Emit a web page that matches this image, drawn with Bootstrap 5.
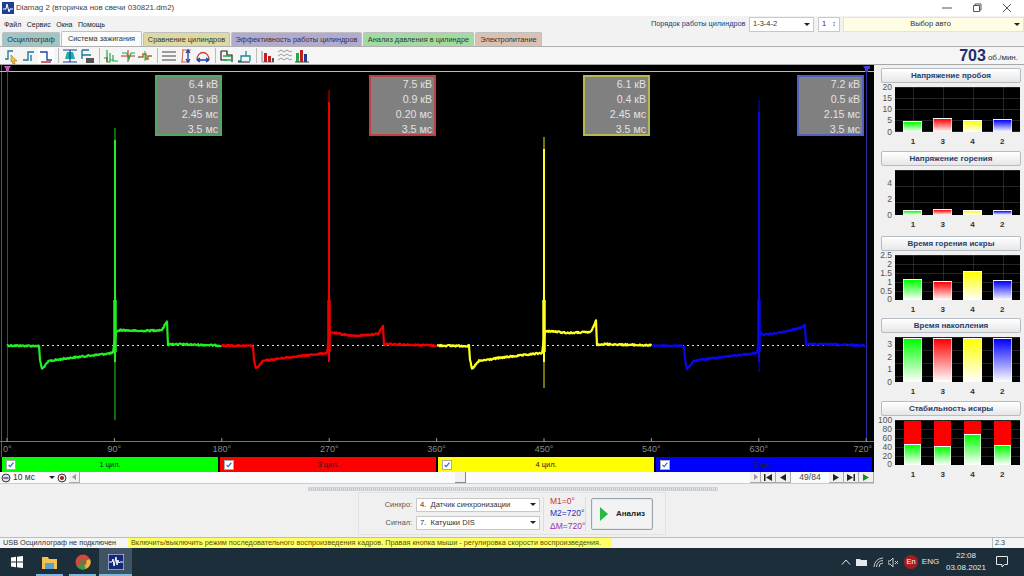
<!DOCTYPE html>
<html lang="ru">
<head>
  <meta charset="UTF-8">
  <meta name="viewport" content="width=device-width, initial-scale=1">
  <title>Diamag 2</title>
  <link href="https://cdn.jsdelivr.net/npm/bootstrap@5.3.2/dist/css/bootstrap.min.css" rel="stylesheet">
  <style>
    html, body { width: 1024px; height: 576px; overflow: hidden; }
    body { background: #f0f0f0; font-family: "Liberation Sans", Arial, sans-serif; font-size: 7.4px; color: #222; line-height: 1; white-space: nowrap; }

    /* title + menu */
    .title-row { height: 16px; background: #fff; padding-left: 2px; }
    .title-text { font-size: 7.9px; color: #444; margin-left: 2px; }
    .win-btn { width: 30px; text-align: center; line-height: 0; }
    .menu-row { height: 16px; background: #f2f2f2; padding-left: 4px; }
    .menu-row .menu-item { margin-right: 5.5px; font-size: 7px; }
    .order-label { color: #23406e; font-size: 7.3px; margin-right: 4px; width: 94px; }
    .win-select { height: 15px; background-color: #fff; border: 1px solid #c8c8c8; border-radius: 0; font-size: 7.5px; padding: 0 3px; display: flex; align-items: center; justify-content: space-between; color: #333; }
    .win-select i { width: 0; height: 0; border-left: 3px solid transparent; border-right: 3px solid transparent; border-top: 3px solid #222; }
    .auto-select { background: #fffde3; flex: 1; margin-left: 3px; border-color: #e8e6c8; }

    /* tabs */
    .tab-row { height: 15px; padding-left: 2px; border-bottom: 1px solid #b0b0b0; background: #f2f2f2; }
    .app-tab { height: 14px; padding: 0; font-size: 7.4px; border: 1px solid #c0c0c0; border-bottom: 0; border-radius: 2px 2px 0 0; margin-right: 1px; color: #333; display: flex; align-items: center; justify-content: center; }
    .app-tab.on { background: #fbfbfb; height: 15px; margin-top: -1px; margin-bottom: -1px; }

    /* toolbar */
    .tool-row { height: 18px; background: #f5f5f5; border-bottom: 1px solid #a8a8a8; padding-left: 4px; }
    .tool-row svg { width: 16px; height: 16px; flex: none; margin-right: 1px; }
    .tool-row svg.pressed { background: #fff; }
    .tool-sep { width: 1px; height: 15px; background: #bbb; margin: 0 3px; flex: none; }
    .rpm { font-size: 16px; font-weight: 700; color: #1b2f6b; }
    .rpm-unit { font-size: 8px; color: #333; margin: 5px 6px 0 2px; }

    /* scope */
    .work-row { height: 419px; }
    .scope-col { width: 874px; flex: none; }
    .scope-box { height: 392px; background: #000; }
    .scope-box svg { display: block; }
    .info-box { position: absolute; top: 10px; width: 67px; height: 61px; background: #808080; border: 2px solid; color: #e2e2e2; font-size: 10.6px; line-height: 15px; text-align: right; padding: 0 2px 0 0; }
    .chan-row { height: 15px; background: #000; padding: 0 2px; gap: 2px; }
    .chan-bar { flex: 1; color: #222; font-size: 7.5px; padding-left: 4px; }
    .chan-bar span { flex: 1; text-align: center; padding-right: 14px; }
    .chan-check { width: 10px; height: 10px; background: #fff; border: 1px solid #aaa; flex: none; }
    .chan-check svg { display: block; }
    .scroll-row { height: 12px; background: #fbfbfb; border-bottom: 1px solid #ccc; }
    .mini-btn { width: 15px; height: 11px; background: #f0f0f0; border-right: 1px solid #aaa; border-bottom: 1px solid #aaa; display: flex; align-items: center; justify-content: center; flex: none; }
    .scroll-track { flex: 1; position: relative; }
    .scroll-thumb { position: absolute; left: 375px; top: 0; width: 11px; height: 11px; background: #f0f0f0; border-right: 1px solid #888; border-bottom: 1px solid #888; }

    /* right gauges */
    .gauge-col { width: 150px; flex: none; padding: 3px 3px 0 4px; }
    .gauge-btn { height: 15px; width: 140px; margin-left: 3px; padding: 0; border: 1px solid #b4bcc4; border-radius: 2px; background: linear-gradient(#fff, #e6e6e6); color: #24406e; font-size: 8px; font-weight: 700; display: block; }
    .gauge-body { margin-top: 4px; height: 45px; }
    .gauge-axis { width: 17px; flex: none; color: #555; font-size: 8.5px; text-align: right; padding-right: 3px; margin-top: -4px; margin-bottom: -4px; }
    .gauge-plot { width: 125px; height: 45px; background-color: #000; padding: 0 3px; }
    .gauge-slot { flex: 1; display: flex; flex-direction: column; align-items: center; justify-content: flex-end; }
    .gauge-bar { width: 19px; border: 1px solid rgba(255,255,255,.6); border-bottom: 0; }
    .gauge-names { width: 125px; margin-left: 17px; padding: 0 3px; font-size: 8px; font-weight: 700; color: #333; margin-top: 6px; }
    .gauge-names span { flex: 1; text-align: center; }

    /* lower */
    .lower-row { height: 53px; background: #f0f0f0; }
    .lower-slider { position: absolute; left: 308px; top: 3px; width: 410px; height: 4px; background: repeating-linear-gradient(90deg, #b8c4d0 0 1px, #e4e8ec 1px 2px); border: 1px solid #cdd3da; }
    .sync-box { position: absolute; left: 358px; top: 8px; width: 308px; height: 43px; border: 1px solid #e2e2e2; background: #f0f0f0; }
    .sync-label { width: 53px; text-align: right; color: #555; font-size: 7.3px; margin-right: 4px; }
    .sync-select { width: 124px; height: 14px; font-size: 7.6px; }
    .marks { width: 43px; margin-left: 3px; padding-left: 6px; border-left: 1px solid #ddd; border-right: 1px solid #ddd; height: 34px; font-size: 8.5px; }
    .run-btn { width: 62px; height: 32px; margin-left: 5px; padding: 0 0 0 8px; border: 1px solid #98a4ac; border-radius: 2px; background: #f3f3f3; font-size: 8px; font-weight: 700; color: #222; box-shadow: 0 0 0 1px #e4e8ec inset; gap: 8px; }

    /* status + task bar */
    .status-row { height: 11px; border-top: 1px solid #bbb; background: #f4f4f4; padding-left: 3px; font-size: 7.3px; color: #333; }
    .status-hint { position: absolute; left: 128px; top: 0; height: 10px; width: 484px; background: #ffff66; color: #555500; padding-left: 3px; display: flex; align-items: center; }
    .status-ver { position: absolute; left: 992px; top: 0; height: 10px; border-left: 1px solid #bbb; padding-left: 2px; color: #444; display: flex; align-items: center; }
    .task-row { height: 28px; background: #1d2e3b; color: #e4e8ea; }
    .task-icon { width: 33px; height: 28px; display: flex; align-items: center; justify-content: center; position: relative; }
    .task-icon.open::after { content: ""; position: absolute; left: 3px; right: 3px; bottom: 0; height: 2px; background: #7fb6dc; }
    .task-icon.live { background: #3e5364; }
    .task-icon.live::after { left: 0; right: 0; }
    .tray-item { color: #e4e8ea; font-size: 8px; }
    .lang-dot { width: 14px; height: 14px; border-radius: 50%; background: #a81c1c; color: #fff; font-size: 7.5px; }
    .clock { width: 52px; text-align: center; font-size: 8px; line-height: 12px; }
  </style>
</head>
<body class="d-flex flex-column">

  <!-- Title bar -->
  <div class="title-row d-flex align-items-center">
    <svg width="12" height="12" viewBox="0 0 12 12"><rect width="12" height="12" fill="#1c3f94"/><path d="M1 7h3l1-5 2 8 1-3h3" fill="none" stroke="#fff"/></svg>
    <span class="title-text">Diamag 2 (вторичка нов свечи 030821.dm2)</span>
    <div class="ms-auto d-flex" style="margin-right:2px">
      <div class="win-btn"><svg width="10" height="10" viewBox="0 0 10 10"><path d="M0 5h10" stroke="#555"/></svg></div>
      <div class="win-btn"><svg width="10" height="10" viewBox="0 0 10 10"><path d="M1.500 2.500h6v6h-6zM3 2.500V1h6v6H7.500" fill="none" stroke="#555"/></svg></div>
      <div class="win-btn"><svg width="10" height="10" viewBox="0 0 10 10"><path d="M1 1l8 8M9 1l-8 8" stroke="#555"/></svg></div>
    </div>
  </div>

  <!-- Menu -->
  <div class="menu-row d-flex align-items-center">
    <span class="menu-item">Файл</span><span class="menu-item">Сервис</span><span class="menu-item">Окна</span><span class="menu-item">Помощь</span>
    <div class="ms-auto d-flex align-items-center" style="width:373px">
      <span class="order-label">Порядок работы цилиндров</span>
      <div class="win-select" style="width:65px">1-3-4-2<i></i></div>
      <div class="win-select ms-1" style="width:22px">1<span>&#8597;</span></div>
      <div class="win-select auto-select"><span class="flex-grow-1 text-center">Выбор авто</span><i></i></div>
    </div>
  </div>

  <!-- Tabs -->
  <div class="tab-row d-flex">
    <div class="app-tab" style="width:58px;background:#9dc6c6">Осциллограф</div>
    <div class="app-tab on" style="width:81px">Система зажигания</div>
    <div class="app-tab" style="width:87px;background:#dcd9a2">Сравнение цилиндров</div>
    <div class="app-tab" style="width:131px;background:#b3aad2">Эффективность работы цилиндров</div>
    <div class="app-tab" style="width:111px;background:#a2dba2">Анализ давления в цилиндре</div>
    <div class="app-tab" style="width:67px;background:#d9c2b2">Электропитание</div>
  </div>

  <!-- Toolbar -->
  <div class="tool-row d-flex align-items-center" id="toolbar">
    <svg viewBox="0 0 16 16"><path d="M1 11h3V3h5" fill="none" stroke="#1a7a9a" stroke-width="1.300"/><path d="M7 7l6 6-3 0 1 3-2 0-1-3-1 1z" fill="#f0c040" stroke="#a07810" stroke-width=".6"/></svg>
    <svg viewBox="0 0 16 16"><path d="M2 12h5V4h6M10 7v6" fill="none" stroke="#1a7a9a" stroke-width="1.400"/></svg>
    <svg class="pressed" viewBox="0 0 16 16"><path d="M2 4h7v8h5" fill="none" stroke="#2244aa" stroke-width="1.400"/><path d="M3 14h10" stroke="#cc2222" stroke-width="1.400"/></svg>
    <span class="tool-sep"></span>
    <svg viewBox="0 0 16 16"><path d="M3 11 5 4h6l2 7z" fill="#1ab0a8"/><path d="M1 2h14M1 14h14M8 2v12" stroke="#1c3f94" stroke-width="1.200"/></svg>
    <svg viewBox="0 0 16 16"><path d="M3 2h7M3 2v9M3 7h9" fill="none" stroke="#1a7a9a" stroke-width="1.400"/><rect x="7" y="10" width="8" height="5" fill="#555"/></svg>
    <span class="tool-sep"></span>
    <svg viewBox="0 0 16 16"><path d="M1 10h3V2v12h3V5v7h3V7v6h5" fill="none" stroke="#22aa44" stroke-width="1.200"/><path d="M4 14V9" stroke="#cc2222"/></svg>
    <svg viewBox="0 0 16 16"><path d="M1 8h14M8 2v12" stroke="#cc2222"/><path d="M2 5h5l2 6 2-6h4" fill="none" stroke="#22aa44" stroke-width="1.200"/></svg>
    <svg viewBox="0 0 16 16"><path d="M1 9h5V6h3v5h2V8h4" fill="none" stroke="#a86a20" stroke-width="1.400"/><path d="M8 3v10" stroke="#22aa44"/></svg>
    <span class="tool-sep"></span>
    <svg viewBox="0 0 16 16"><path d="M1 4h14M1 8h14M1 12h14" stroke="#444" stroke-width="1.200"/></svg>
    <svg viewBox="0 0 16 16"><path d="M4 2h9M3 14h9M5 2 4 14" fill="none" stroke="#d06040"/><path d="M10 3v10M8 5l2-3 2 3M8 11l2 3 2-3" fill="none" stroke="#1c3fb4" stroke-width="1.300"/></svg>
    <svg viewBox="0 0 16 16"><path d="M2 12C2 2 14 2 14 12" fill="none" stroke="#d04040" stroke-width="1.300"/><path d="M2 12h12M2 12l3-2M2 12l3 2M14 12l-3-2M14 12l-3 2" fill="none" stroke="#1c3fb4" stroke-width="1.300"/></svg>
    <span class="tool-sep"></span>
    <svg viewBox="0 0 16 16"><path d="M2 3h6v4h5v7M2 3v9h6" fill="none" stroke="#222" stroke-width="1.200"/><path d="M4 8h8M4 12h8" stroke="#22aa44" stroke-width="1.300"/></svg>
    <svg viewBox="0 0 16 16"><path d="M2 13h3V8h5V3M10 8h4v5" fill="none" stroke="#1a8a9a" stroke-width="1.300"/><path d="M2 14h12" stroke="#222"/></svg>
    <span class="tool-sep"></span>
    <svg viewBox="0 0 16 16"><path d="M2 3v11h12" fill="none" stroke="#888"/><rect x="4" y="5" width="3" height="9" fill="#c02020"/><rect x="8" y="8" width="3" height="6" fill="#c02020"/><rect x="12" y="10" width="2" height="4" fill="#555"/></svg>
    <svg viewBox="0 0 16 16"><path d="M1 4l3-2 3 2 3-2 3 2 2-1M1 8l3-2 3 2 3-2 3 2 2-1M1 12l3-2 3 2 3-2 3 2 2-1" fill="none" stroke="#999"/></svg>
    <svg viewBox="0 0 16 16"><rect x="2" y="5" width="3" height="9" fill="#22aa44"/><rect x="6" y="2" width="3" height="12" fill="#c02020"/><rect x="10" y="6" width="3" height="8" fill="#1c3f94"/><path d="M1 14h14" stroke="#444"/></svg>
    <div class="ms-auto d-flex align-items-center"><span class="rpm">703</span><span class="rpm-unit">об./мин.</span></div>
  </div>

  <div class="work-row d-flex">
    <div class="scope-col d-flex flex-column">
      <!-- Oscillogram -->
      <div class="scope-box position-relative">
        <svg id="scope" width="874" height="392" viewBox="0 65 874 392"></svg>
        <div class="info-box" style="left:155px;border-color:#55a860">6.4 кВ<br>0.5 кВ<br>2.45 мс<br>3.5 мс</div>
        <div class="info-box" style="left:369px;border-color:#c04040">7.5 кВ<br>0.9 кВ<br>0.20 мс<br>3.5 мс</div>
        <div class="info-box" style="left:583px;border-color:#b8b850">6.1 кВ<br>0.4 кВ<br>2.45 мс<br>3.5 мс</div>
        <div class="info-box" style="left:797px;border-color:#5060c0">7.2 кВ<br>0.5 кВ<br>2.15 мс<br>3.5 мс</div>
      </div>
      <!-- Cylinders -->
      <div class="chan-row d-flex">
        <div class="chan-bar d-flex align-items-center" style="background:#00ff00"><div class="chan-check"><svg viewBox="0 0 10 10"><path d="M2 5l2 2 4-5" fill="none" stroke="#2a6fc0" stroke-width="1.500"/></svg></div><span>1 цил.</span></div>
        <div class="chan-bar d-flex align-items-center" style="background:#ff0000"><div class="chan-check"><svg viewBox="0 0 10 10"><path d="M2 5l2 2 4-5" fill="none" stroke="#2a6fc0" stroke-width="1.500"/></svg></div><span>3 цил.</span></div>
        <div class="chan-bar d-flex align-items-center" style="background:#ffff00"><div class="chan-check"><svg viewBox="0 0 10 10"><path d="M2 5l2 2 4-5" fill="none" stroke="#2a6fc0" stroke-width="1.500"/></svg></div><span>4 цил.</span></div>
        <div class="chan-bar d-flex align-items-center" style="background:#0000ff"><div class="chan-check"><svg viewBox="0 0 10 10"><path d="M2 5l2 2 4-5" fill="none" stroke="#2a6fc0" stroke-width="1.500"/></svg></div><span>2 цил.</span></div>
      </div>
      <!-- Frame scroller -->
      <div class="scroll-row d-flex align-items-center">
        <svg style="margin-left:1px" width="10" height="10" viewBox="0 0 10 10"><circle cx="5" cy="5" r="4" fill="#dde" stroke="#334"/><path d="M2.500 5h5" stroke="#112"/></svg>
        <div class="win-select border-0 bg-transparent" style="width:46px;height:11px;font-size:8.5px;padding:0 2px">10 мс<i></i></div>
        <svg width="10" height="10" viewBox="0 0 10 10"><circle cx="5" cy="5" r="4" fill="#eee" stroke="#334"/><circle cx="5" cy="5" r="2" fill="#a02020"/></svg>
        <div class="mini-btn" style="width:11px;margin-left:2px"><svg width="5" height="6" viewBox="0 0 5 6"><path d="M4 0v6L0 3z" fill="#999"/></svg></div>
        <div class="scroll-track align-self-stretch"><div class="scroll-thumb"></div></div>
        <div class="mini-btn" style="width:11px"><svg width="5" height="6" viewBox="0 0 5 6"><path d="M1 0v6l4-3z" fill="#999"/></svg></div>
        <div class="mini-btn"><svg width="8" height="7" viewBox="0 0 8 7"><path d="M0 0h1.500v7H0zM8 0v7L2 3.500z" fill="#222"/></svg></div>
        <div class="mini-btn"><svg width="6" height="7" viewBox="0 0 6 7"><path d="M6 0v7L0 3.500z" fill="#222"/></svg></div>
        <div class="text-center" style="width:38px;font-size:8.500px;color:#444">49/84</div>
        <div class="mini-btn"><svg width="6" height="7" viewBox="0 0 6 7"><path d="M0 0v7l6-3.500z" fill="#222"/></svg></div>
        <div class="mini-btn"><svg width="8" height="7" viewBox="0 0 8 7"><path d="M8 0H6.500v7H8zM0 0v7l6-3.500z" fill="#222"/></svg></div>
        <div class="mini-btn"><svg width="6" height="7" viewBox="0 0 6 7"><path d="M0 0v7l6-3.500z" fill="#1c8a1c"/></svg></div>
      </div>
    </div>
    <!-- Gauges filled from data below -->
    <div class="gauge-col" id="gauges"></div>
  </div>

  <!-- Sync panel -->
  <div class="lower-row position-relative">
    <div class="lower-slider"></div>
    <div class="sync-box d-flex align-items-center">
      <div class="d-flex flex-column gap-1">
        <div class="d-flex align-items-center"><span class="sync-label">Синхро:</span><div class="win-select sync-select">4.&nbsp; Датчик синхронизации<i></i></div></div>
        <div class="d-flex align-items-center"><span class="sync-label">Сигнал:</span><div class="win-select sync-select">7.&nbsp; Катушки DIS<i></i></div></div>
      </div>
      <div class="marks d-flex flex-column justify-content-between">
        <span style="color:#d03030">M1=0°</span><span style="color:#2030c0">M2=720°</span><span style="color:#9030b0">ΔМ=720°</span>
      </div>
      <button type="button" class="btn run-btn d-flex align-items-center"><svg width="8" height="14" viewBox="0 0 8 14"><path d="M0 0l8 7-8 7z" fill="#22bb44"/></svg>Анализ</button>
    </div>
  </div>

  <!-- Status -->
  <div class="status-row position-relative d-flex align-items-center">
    USB Осциллограф не подключен
    <div class="status-hint">Включить/выключить режим последовательного воспроизведения кадров. Правая кнопка мыши - регулировка скорости воспроизведения.</div>
    <div class="status-ver">2.3</div>
  </div>

  <!-- Task bar -->
  <div class="task-row d-flex align-items-center">
    <div class="task-icon"><svg width="12" height="12" viewBox="0 0 12 12"><path d="M0 1.500 5 .8v4.700H0zM6 .7 12 0v5.500H6zM0 6.500h5v4.700L0 10.500zM6 6.500h6V12l-6-.8z" fill="#fff"/></svg></div>
    <div class="task-icon open"><svg width="15" height="13" viewBox="0 0 15 13"><path d="M0 1h6l1 2h8v10H0z" fill="#f2c14e"/><rect x="3" y="7" width="9" height="6" fill="#5a9fd4"/></svg></div>
    <div class="task-icon open"><svg width="16" height="16" viewBox="0 0 16 16"><circle cx="8" cy="8" r="7.500" fill="#d6483c"/><path d="M8 8 1.500 12A7.500 7.500 0 0 0 11 15z" fill="#3a9a50"/><path d="M8 8l3 7A7.500 7.500 0 0 0 15 5z" fill="#e8b93c"/><circle cx="8" cy="8" r="3.500" fill="#8a6a40"/></svg></div>
    <div class="task-icon open live"><svg width="16" height="16" viewBox="0 0 16 16"><rect width="16" height="16" fill="#14287a" stroke="#fff"/><path d="M1 8h3l1-3 1 7 2-9 1 8 1-5 1 3 1-1h3" fill="none" stroke="#fff"/></svg></div>
    <div class="ms-auto d-flex align-items-center">
      <svg width="10" height="6" viewBox="0 0 10 6"><path d="M1 5.500 5 1l4 4.500" fill="none" stroke="#e4e8ea"/></svg>
      <svg style="margin-left:5px" width="11" height="9" viewBox="0 0 11 9"><path d="M0 1h4l1 1h6v6H0z" fill="#e4e8ea"/></svg>
      <svg style="margin-left:6px" width="11" height="11" viewBox="0 0 11 11"><path d="M1 10a9 9 0 0 1 9-9M3.500 10A6.500 6.500 0 0 1 10 3.500M6 10a4 4 0 0 1 4-4" fill="none" stroke="#c4ccd0"/></svg>
      <svg style="margin-left:4px" width="11" height="9" viewBox="0 0 11 9"><path d="M0 3h2l3-3v9L2 6H0zM7 3l3 3M10 3 7 6" fill="none" stroke="#c4ccd0"/></svg>
      <div class="lang-dot d-flex align-items-center justify-content-center" style="margin-left:5px">En</div>
      <span class="tray-item text-center" style="width:19px;margin-left:3px;margin-right:0">ENG</span>
      <div class="clock">22:08<br>03.08.2021</div>
      <svg style="margin:0 16px 0 4px" width="12" height="12" viewBox="0 0 12 12"><path d="M.5.500h11v8h-3L6 11 6 8.500H.5z" fill="none" stroke="#e4e8ea"/></svg>
    </div>
  </div>

  <script src="https://cdn.jsdelivr.net/npm/bootstrap@5.3.2/dist/js/bootstrap.bundle.min.js"></script>
  <script>
    // gauges on the right
    const barColors = ['#00ff00', '#ff0000', '#ffff00', '#0000ff'];
    const gauges = [
      { title: 'Напряжение пробоя', ticks: ['20', '15', '10', '5', '0'], top: 0, bars: [11, 14, 12, 13], w: 19, step: 11, h: 83 },
      { title: 'Напряжение горения', ticks: ['4', '2', '0'], top: 13, bars: [5.5, 6, 5.5, 5.5], w: 19, step: 16, h: 85 },
      { title: 'Время горения искры', ticks: ['2.5', '2', '1.5', '1', '0.5', '0'], top: 0, bars: [21, 19, 29, 20], w: 19, step: 9, h: 82 },
      { title: 'Время накопления', ticks: ['3', '2', '1', '0'], top: 7, bars: [44, 44, 44, 44], w: 19, step: 13, h: 83 },
      { title: 'Стабильность искры', ticks: ['100', '80', '60', '40', '20', '0'], top: 0, bars: [21, 19, 31, 20], w: 17, step: 9, h: 79, stacked: true }
    ];

    document.getElementById('gauges').innerHTML = gauges.map(g => {
      const slots = g.bars.map((h, i) => {
        const color = g.stacked ? '#00ff00' : barColors[i];
        const cap = g.stacked ? `<div style="width:${g.w}px;height:${44 - h}px;background:#ff0000"></div>` : '';
        return `<div class="gauge-slot">${cap}<div class="gauge-bar" style="width:${g.w}px;height:${h}px;background:linear-gradient(${color}, #fff)"></div></div>`;
      }).join('');
      const names = ['1', '3', '4', '2'].map(n => `<span>${n}</span>`).join('');
      const ticks = g.ticks.map(t => `<span>${t}</span>`).join('');
      const grid = `background-image:linear-gradient(rgba(255,255,255,.14) 1px, transparent 1px),linear-gradient(90deg, rgba(255,255,255,.14) 1px, transparent 1px);background-size:30px ${g.step}px;background-position:0 0, 18px 0`;
      return `<div style="height:${g.h}px">
        <button type="button" class="btn gauge-btn">${g.title}</button>
        <div class="gauge-body d-flex">
          <div class="gauge-axis d-flex flex-column justify-content-between" style="padding-top:${g.top}px">${ticks}</div>
          <div class="gauge-plot d-flex" style="${grid}">${slots}</div>
        </div>
        <div class="gauge-names d-flex">${names}</div>
      </div>`;
    }).join('');

    // oscillogram traces
    let seed = 12345;
    function rnd() {
      seed = (seed * 1103515245 + 12345) & 0x7fffffff;
      return seed / 0x7fffffff - 0.5;
    }

    function tracePath(knots) {
      let d = '';
      for (let k = 0; k < knots.length - 1; k++) {
        const [x0, y0] = knots[k], [x1, y1] = knots[k + 1];
        const n = Math.max(1, Math.round((x1 - x0) * 1.5));
        for (let i = 0; i < n; i++) {
          const x = x0 + (x1 - x0) * i / n;
          const y = y0 + (y1 - y0) * i / n + rnd() * 1.6;
          d += (d ? 'L' : 'M') + x.toFixed(1) + ' ' + y.toFixed(1);
        }
      }
      return d;
    }

    const traces = [
      { color: '#22ee22', x: 7, fall: 39, spike: 115, end: 168, stop: 222, top: 128, bottom: 420, plateau: [330, 331, 330, 321] },
      { color: '#f00000', x: 222, fall: 253, spike: 329, end: 384, stop: 437, top: 90, bottom: 352, plateau: [333, 336, 334, 326] },
      { color: '#ffff20', x: 437, fall: 469, spike: 544, end: 597, stop: 652, top: 137, bottom: 388, plateau: [331, 333, 332, 321] },
      { color: '#0808e8', x: 652, fall: 684, spike: 759, end: 806, stop: 866, top: 100, bottom: 372, plateau: [335, 332, 328, 325] }
    ];

    let svg = '';
    svg += '<path d="M1.500 65v392" stroke="#556"/>';
    svg += '<path d="M0 71.500h874" stroke="#bbb"/>';
    svg += '<path d="M7.500 66v376" stroke="#603060"/><path d="M866.500 66v376" stroke="#2828a0"/>';
    svg += '<path d="M4 66h7l-2 3v3H6v-3z" fill="#c060c0"/><path d="M863 66h7v3h-2v3h-3v-3z" fill="#4040e0"/>';
    svg += '<path d="M0 441.500h874" stroke="#777"/>';
    ['0°', '90°', '180°', '270°', '360°', '450°', '540°', '630°', '720°'].forEach((label, i) => {
      const x = 7 + i * 107.4;
      svg += `<path d="M${x.toFixed(1)} 438v4" stroke="#999"/>`;
      svg += `<text x="${i === 0 ? 3 : i === 8 ? 872 : x.toFixed(1)}" y="452" fill="#8a8a8a" font-size="9" font-family="Liberation Sans" text-anchor="${i === 0 ? 'start' : i === 8 ? 'end' : 'middle'}">${label}</text>`;
    });
    svg += '<path d="M7 345.500h860" stroke="#ddd" stroke-dasharray="2 3"/>';

    traces.forEach(t => {
      const p = t.plateau;
      const knots = [[t.x, 345.5], [t.fall, 346], [t.fall + 1, 360], [t.fall + 3, 369], [t.fall + 10, 361], [t.fall + 30, 358], [t.spike - 2, 353],
        [t.spike + 1, 332], [t.spike + 5, p[0]], [t.spike + 25, p[1]], [t.end - 6, p[2]], [t.end - 1, p[3]], [t.end, 345], [t.end + 3, 344], [t.stop, 345.5]];
      svg += `<path d="${tracePath(knots)}" fill="none" stroke="${t.color}" stroke-width="2.200" stroke-linejoin="round"/>`;
      svg += `<path d="M${t.spike} ${t.top}V${t.bottom}" stroke="${t.color}" stroke-width="1" opacity=".9"/>`;
      svg += `<path d="M${t.spike} ${t.top + 12}V362" stroke="${t.color}" stroke-width="2"/>`;
      svg += `<path d="M${t.spike} 300V352" stroke="${t.color}" stroke-width="3.500"/>`;
    });
    document.getElementById('scope').innerHTML = svg;
  </script>
</body>
</html>
